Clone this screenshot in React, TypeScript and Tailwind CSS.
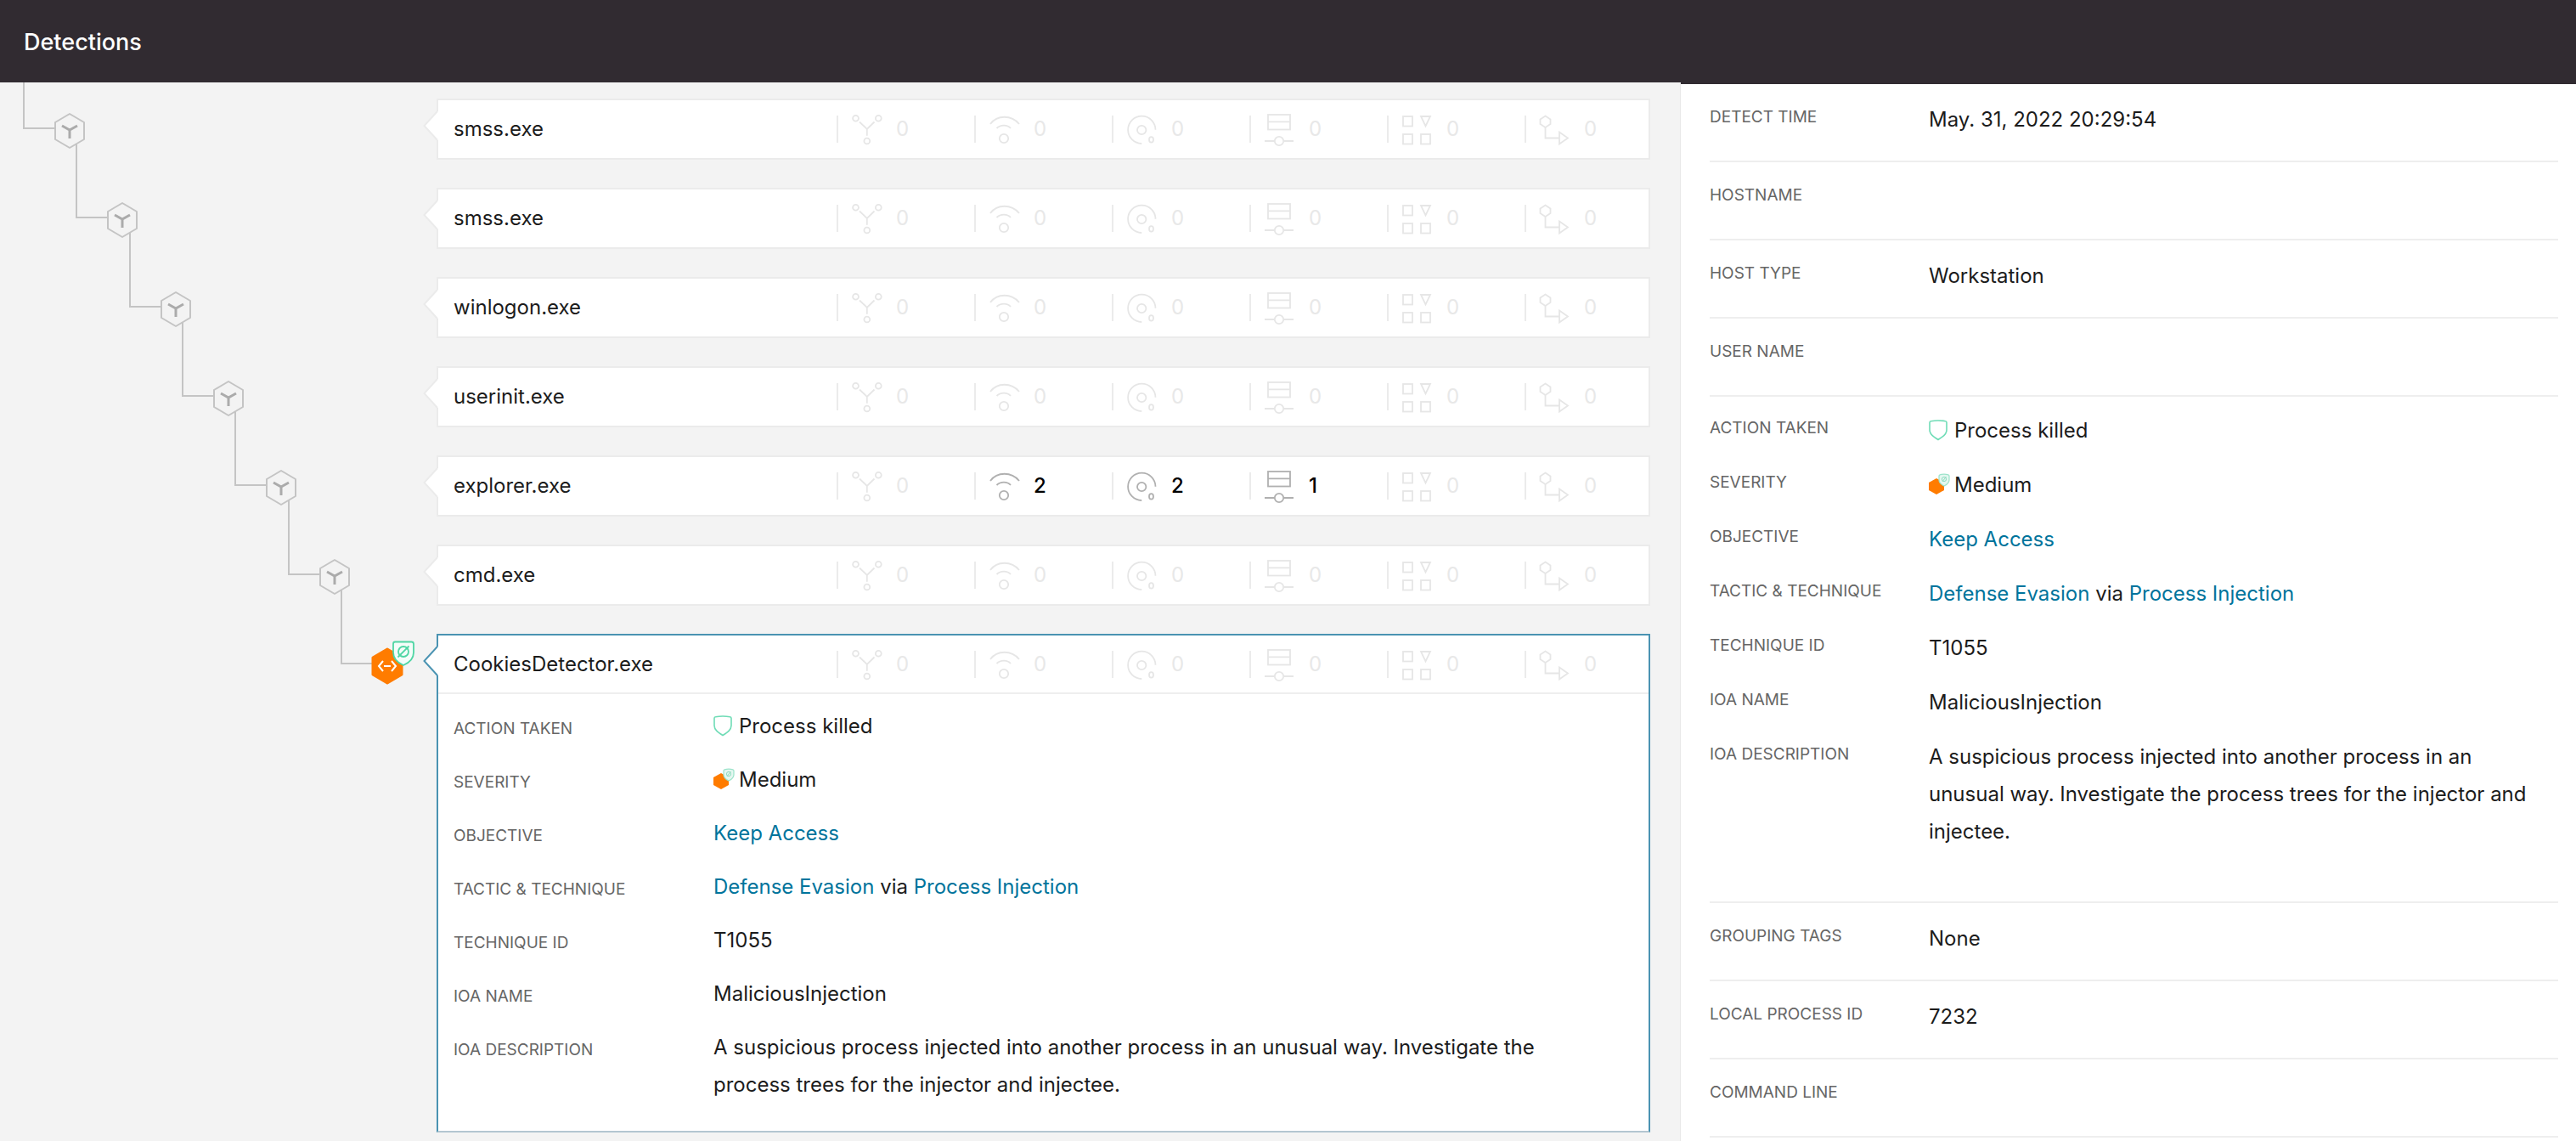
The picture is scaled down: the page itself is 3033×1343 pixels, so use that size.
import React from 'react';

const HEX = 'M0 -20 L17 -10 V10 L0 20 L-17 10 V-10 Z';

const processes = [
  { name: 'smss.exe', counts: [0, 0, 0, 0, 0, 0] },
  { name: 'smss.exe', counts: [0, 0, 0, 0, 0, 0] },
  { name: 'winlogon.exe', counts: [0, 0, 0, 0, 0, 0] },
  { name: 'userinit.exe', counts: [0, 0, 0, 0, 0, 0] },
  { name: 'explorer.exe', counts: [0, 2, 2, 1, 0, 0] },
  { name: 'cmd.exe', counts: [0, 0, 0, 0, 0, 0] },
];

function ShieldIcon() {
  return (
    <svg className="w-[22px] h-[26px] shrink-0" viewBox="0 0 22 26" fill="none" stroke="#6fdcb6" strokeWidth="1.6">
      <path d="M2.500 1.800 Q11 0.200 19.500 1.800 Q21 2 21 3.500 V12 C21 17 16.500 20 11 23.500 C5.500 20 1 17 1 12 V3.500 Q1 2 2.500 1.800 Z" />
    </svg>
  );
}

function SeverityIcon() {
  return (
    <svg className="w-[22px] h-[30px] shrink-0 overflow-visible" viewBox="0 0 22 30">
      <path d="M9 7 L18 12 V21 L9 26 L0 21 V12 Z" fill="#ff7c00" />
      <path
        d="M13 2.800 Q18 1.600 23 2.800 Q24 3 24 4.500 V9 C24 12.500 21 14.500 18 16 C15 14.500 12 12.500 12 9 V4.500 Q12 3 13 2.800 Z"
        fill="#e4f7f0"
        stroke="#9be3ca"
        strokeWidth="1.2"
      />
      <circle cx="18" cy="8" r="2.600" fill="none" stroke="#8fdcc0" />
      <path d="M16 10.800 L20.500 5" stroke="#8fdcc0" />
    </svg>
  );
}

// Counters shown on each process row, in display order
const counterIcons = [
  {
    label: 'Process operations',
    shape: (
      <>
        <circle cx="4.500" cy="5.300" r="3.400" />
        <circle cx="31.300" cy="5.300" r="3.400" />
        <circle cx="17.800" cy="32" r="3.400" />
        <path d="M9 9.500 L17.800 18 L26.500 9.500 M17.800 18 V25.700" />
      </>
    ),
  },
  {
    label: 'Network operations',
    shape: (
      <>
        <path d="M1 12 C9 1 26 1 35 12" />
        <path d="M8.500 17 C13 12.500 21 12.500 25 17" />
        <circle cx="17" cy="29" r="5.200" />
      </>
    ),
  },
  {
    label: 'Disk operations',
    shape: (
      <>
        <path d="M33.500 18.700 A16.200 16.200 0 1 0 17.200 35" />
        <circle cx="17.200" cy="19" r="5.200" />
        <ellipse cx="28.500" cy="30.400" rx="2.500" ry="3.200" />
      </>
    ),
  },
  {
    label: 'Registry operations',
    shape: (
      <>
        <rect x="4" y="1" width="26" height="17.500" />
        <path d="M4 9.300 H30 M0 32 H12 M22 32 H34" />
        <circle cx="17" cy="32" r="5.200" />
      </>
    ),
  },
  {
    label: 'Modules',
    shape: (
      <>
        <rect x="1" y="3" width="11" height="11.500" />
        <path d="M22 3 H33 L27.500 14.500 Z" />
        <rect x="1" y="24" width="11" height="11.500" />
        <rect x="22" y="24" width="11" height="11.500" />
      </>
    ),
  },
  {
    label: 'Scripts',
    shape: (
      <>
        <path d="M6.500 2.500 L12.500 6.500 V12 L6.500 16 L0.500 12 V6.500 Z" />
        <path d="M6.500 16 V28.500 H23" />
        <path d="M23 21.500 L33 28.500 L23 35.500 Z" />
      </>
    ),
  },
];

function Counters({ counts }: { counts: number[] }) {
  return (
    <div className="flex shrink-0">
      {counterIcons.map((item, i) => (
        <div key={item.label} className={i === counterIcons.length - 1 ? 'flex w-[146px]' : 'flex w-[162px]'}>
          <div className="w-[2px] h-8 bg-[#ebebeb] self-center" />
          <div className="flex items-center gap-4 pl-4">
            <svg
              className={counts[i] ? 'w-9 h-9 overflow-visible text-[#b0b0b0]' : 'w-9 h-9 overflow-visible text-[#e6e6e6]'}
              viewBox="0 0 36 36"
              fill="none"
              stroke="currentColor"
              strokeWidth="1.8"
              aria-label={item.label}
            >
              {item.shape}
            </svg>
            <span className={counts[i] ? 'font-medium text-black' : 'text-[#e8e8e8]'}>{counts[i]}</span>
          </div>
        </div>
      ))}
    </div>
  );
}

function Notch({ stroke }: { stroke: string }) {
  return (
    <svg className="absolute -left-[18px] top-3 w-5 h-9" viewBox="0 0 20 36">
      <path d="M20 1 H17.500 L1.500 18 L17.500 35 H20 Z" fill="#fff" />
      <path d="M17 1 L1.500 18 L17 35" fill="none" stroke={stroke} strokeWidth="2" />
    </svg>
  );
}

function ProcessRow({ name, counts }: { name: string; counts: number[] }) {
  return (
    <div className="relative flex items-center justify-between h-[72px] pl-[18px] bg-white border-2 border-[#ebebeb]">
      <Notch stroke="#ebebeb" />
      <span>{name}</span>
      <Counters counts={counts} />
    </div>
  );
}

function ProcessTree() {
  return (
    <svg className="w-[514px] h-[740px] shrink-0" viewBox="0 97 514 740" fill="none">
      {processes.map((_, i) => {
        const x = Math.round(28 + i * 62.3);
        const y = 151 + i * 105;
        return (
          <g key={i}>
            <path d={`M${x} ${i === 0 ? 97 : y - 87} V${y} H${x + 38}`} stroke="#c4c4c4" strokeWidth="2" />
            <g transform={`translate(${x + 54} ${y + 3})`}>
              <path d={HEX} stroke="#c4c4c4" strokeWidth="2" strokeLinejoin="round" />
              <path d="M-9 -6 L0 -1 L9 -6 M0 -1 V9" stroke="#ababab" strokeWidth="3" />
            </g>
          </g>
        );
      })}

      {/* Detected process */}
      <path d="M402 694 V781 H440" stroke="#c4c4c4" strokeWidth="2" />
      <g transform="translate(456 784)">
        <path d={HEX} fill="#ff7c00" stroke="#ff7c00" strokeWidth="3" strokeLinejoin="round" />
        <path d="M-5 -6 L-10 0 L-5 6 M5 -6 L10 0 L5 6 M-4 0 H4" stroke="#fff" strokeWidth="2" />
        <path
          d="M9 -28.500 H28.500 Q31 -28.500 31 -26 V-16 C31 -8 26 -4 19 -1 C12 -4 7 -8 7 -16 V-26 Q7 -28.500 9 -28.500 Z"
          fill="#f4fdf9"
          stroke="#4fd6a4"
          strokeWidth="1.800"
        />
        <circle cx="19" cy="-17" r="6" stroke="#4fd6a4" strokeWidth="1.800" />
        <path d="M12.500 -10.500 L25.500 -23.500" stroke="#4fd6a4" strokeWidth="1.800" />
      </g>
    </svg>
  );
}

const details: { label: string; value: React.ReactNode }[] = [
  {
    label: 'ACTION TAKEN',
    value: (
      <span className="flex items-center gap-2">
        <ShieldIcon />
        Process killed
      </span>
    ),
  },
  {
    label: 'SEVERITY',
    value: (
      <span className="flex items-center gap-2">
        <SeverityIcon />
        Medium
      </span>
    ),
  },
  { label: 'OBJECTIVE', value: <a href="#objective" className="text-[#00749c]">Keep Access</a> },
  {
    label: 'TACTIC & TECHNIQUE',
    value: (
      <>
        <a href="#tactic" className="text-[#00749c]">Defense Evasion</a> via{' '}
        <a href="#technique" className="text-[#00749c]">Process Injection</a>
      </>
    ),
  },
  { label: 'TECHNIQUE ID', value: 'T1055' },
  { label: 'IOA NAME', value: 'MaliciousInjection' },
  {
    label: 'IOA DESCRIPTION',
    value:
      'A suspicious process injected into another process in an unusual way. Investigate the process trees for the injector and injectee.',
  },
];

function PanelField({ label, value }: { label: string; value?: React.ReactNode }) {
  return (
    <div className="flex min-h-11">
      <dt className="w-[258px] shrink-0 text-[19px] leading-[38px] text-[#666666]">{label}</dt>
      <dd className="flex-1 pr-5 leading-11">{value}</dd>
    </div>
  );
}

function PanelSection({ label, value }: { label: string; value?: React.ReactNode }) {
  return (
    <dl className="pt-5 pb-[26px] border-b-2 border-[#eeeeee]">
      <PanelField label={label} value={value} />
    </dl>
  );
}

export default function App() {
  return (
    <div className="flex flex-col min-h-screen bg-[#f3f3f3] font-['Inter','Liberation_Sans',sans-serif] text-2xl text-[#1c1c1c]">
      <header className="flex items-center h-[97px] pt-[2px] px-7 bg-[#312b31]">
        <h1 className="text-[27px] font-medium text-white">Detections</h1>
      </header>

      <div className="flex-1 grid grid-cols-[1979fr_1054fr]">
        {/* Process tree */}
        <main className="flex pr-[35px] border-r border-[#e8e8e8]">
          <ProcessTree />
          <div className="flex-1 flex flex-col gap-[33px] pt-[19px]">
            {processes.map((process, i) => (
              <ProcessRow key={i} name={process.name} counts={process.counts} />
            ))}

            <div className="relative bg-white border-2 border-[#4a93b2] border-b-[#b3c6d1]">
              <Notch stroke="#4a93b2" />
              <div className="flex items-center justify-between h-[69px] pl-[18px] border-b-2 border-[#eeeeee]">
                <span>CookiesDetector.exe</span>
                <Counters counts={[0, 0, 0, 0, 0, 0]} />
              </div>
              <dl className="flex flex-col gap-4 pt-4 pb-8 pl-[18px] pr-16">
                {details.map((item) => (
                  <div key={item.label} className="flex">
                    <dt className="w-[306px] shrink-0 pt-[3px] text-[19px] leading-11 text-[#666666]">{item.label}</dt>
                    <dd className="flex-1 leading-11">{item.value}</dd>
                  </div>
                ))}
              </dl>
            </div>
          </div>
        </main>

        {/* Detection details */}
        <aside className="pl-[34px] pr-[21px] bg-white border-t-2 border-t-[#312b31]">
          <PanelSection label="DETECT TIME" value="May. 31, 2022 20:29:54" />
          <PanelSection label="HOSTNAME" />
          <PanelSection label="HOST TYPE" value="Workstation" />
          <PanelSection label="USER NAME" />
          <dl className="flex flex-col gap-5 pt-[18px] pb-[60px] border-b-2 border-[#eeeeee]">
            {details.map((item) => (
              <PanelField key={item.label} label={item.label} value={item.value} />
            ))}
          </dl>
          <PanelSection label="GROUPING TAGS" value="None" />
          <PanelSection label="LOCAL PROCESS ID" value="7232" />
          <PanelSection label="COMMAND LINE" />
        </aside>
      </div>
    </div>
  );
}
